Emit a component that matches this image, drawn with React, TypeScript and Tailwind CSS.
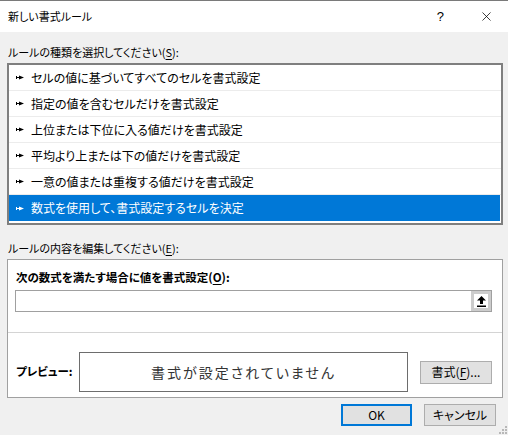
import { X } from 'lucide-react';

const font = "font-['Meiryo_UI','Noto_Sans_CJK_JP',sans-serif] [font-feature-settings:'palt']";

const rules = [
  'セルの値に基づいてすべてのセルを書式設定',
  '指定の値を含むセルだけを書式設定',
  '上位または下位に入る値だけを書式設定',
  '平均より上または下の値だけを書式設定',
  '一意の値または重複する値だけを書式設定',
  '数式を使用して、書式設定するセルを決定',
];

function Bullet({ light }: { light?: boolean }) {
  const c = light ? '#ffffff' : '#000000';
  return (
    <svg width="8" height="5" viewBox="0 0 8 5" className="shrink-0">
      <rect x="0" y="1" width="1" height="3" fill={c} />
      <rect x="0" y="2" width="4" height="1" fill={c} />
      <polygon points="3,0.5 8,2.5 3,4.5" fill={c} />
    </svg>
  );
}

export default function App() {
  return (
    <div className={`w-[508px] h-[435px] bg-[#f0f0f0] text-black border-t border-[#7a7a7a] ${font} relative overflow-hidden`}>
      {/* タイトルバー */}
      <div className="h-[31px] bg-white flex items-center pl-[8px] text-[11px]">
        <span>新しい書式ルール</span>
        <span className="ml-auto text-[13px] font-['Liberation_Sans',sans-serif] mr-[35px]">?</span>
        <X className="w-[15px] h-[15px] mr-[14px]" strokeWidth={1.2} />
      </div>

      <div className="pl-[7px] pr-[5px]">
        <div className="mt-[12px] text-[11px] leading-[16px] pl-px">
          ルールの種類を選択してください(<span className="underline underline-offset-2">S</span>):
        </div>

        {/* ルール一覧 */}
        <div className="mt-[3px] h-[162px] border-2 border-[#7f7f7f] bg-white">
          {rules.map((r, i) => {
            const sel = i === rules.length - 1;
            return (
              <div
                key={i}
                className={`h-[26px] flex items-center gap-[7px] pl-[7px] text-[12px] ${
                  sel ? 'bg-[#0078d7] text-white mr-[1px]' : 'border-b border-[#ececec]'
                }`}
              >
                <Bullet light={sel} />
                <span>{r}</span>
              </div>
            );
          })}
        </div>

        <div className="mt-[15px] text-[11px] leading-[16px] pl-px">
          ルールの内容を編集してください(<span className="underline underline-offset-2">E</span>):
        </div>

        {/* ルール内容 */}
        <div className="mt-[3px] h-[139px] border border-[#a0a0a0] bg-white flex flex-col">
          <div className="pt-[9px] pl-[8px] text-[11.5px] leading-[16px] font-bold">
            次の数式を満たす場合に値を書式設定(<span className="underline underline-offset-2">O</span>):
          </div>
          <div className="mt-[5px] ml-[7px] mr-[10px] h-[22px] border border-[#a0a0a0] flex">
            <div className="flex-1" />
            <div className="w-[20px] h-full border-[3px] border-[#cccccc] bg-white flex items-center justify-center">
              <svg width="9" height="11" viewBox="0 0 9 11">
                <polygon points="4.5,0 9,4.5 6,4.5 6,8 3,8 3,4.5 0,4.5" fill="#000" />
                <rect x="0" y="9.5" width="9" height="1.5" fill="#000" />
              </svg>
            </div>
          </div>
          <div className="mt-[20px] h-px bg-[#d4d4d4]" />
          <div className="mt-[19px] flex items-center pl-[8px]">
            <span className="text-[11.5px] font-bold w-[63px]">プレビュー:</span>
            <div className="w-[329px] h-[40px] border border-[#6d6d6d] flex items-center justify-center text-[14px] tracking-[2px] text-[#333]">
              書式が設定されていません
            </div>
            <button className="ml-[12px] w-[72px] h-[23px] bg-[#e1e1e1] border border-[#adadad] text-[12px] leading-none">
              書式(<span className="underline underline-offset-2">F</span>)...
            </button>
          </div>
        </div>

        {/* ボタン */}
        <div className="mt-[6px] flex justify-end gap-[12px] pr-[7px]">
          <button className="w-[71px] h-[22px] bg-[#e1e1e1] border-2 border-[#0078d7] text-[12px] leading-none">
            OK
          </button>
          <button className="w-[72px] h-[22px] bg-[#e1e1e1] border border-[#adadad] text-[12px] leading-none">
            キャンセル
          </button>
        </div>
      </div>

      {/* サイズ変更グリップ */}
      <svg width="8" height="8" viewBox="0 0 8 8" className="absolute right-[1px] bottom-[1px]">
        {[[6, 0], [3, 3], [6, 3], [0, 6], [3, 6], [6, 6]].map(([x, y], i) => (
          <rect key={i} x={x} y={y} width="2" height="2" fill="#b8b8b8" />
        ))}
      </svg>
    </div>
  );
}
